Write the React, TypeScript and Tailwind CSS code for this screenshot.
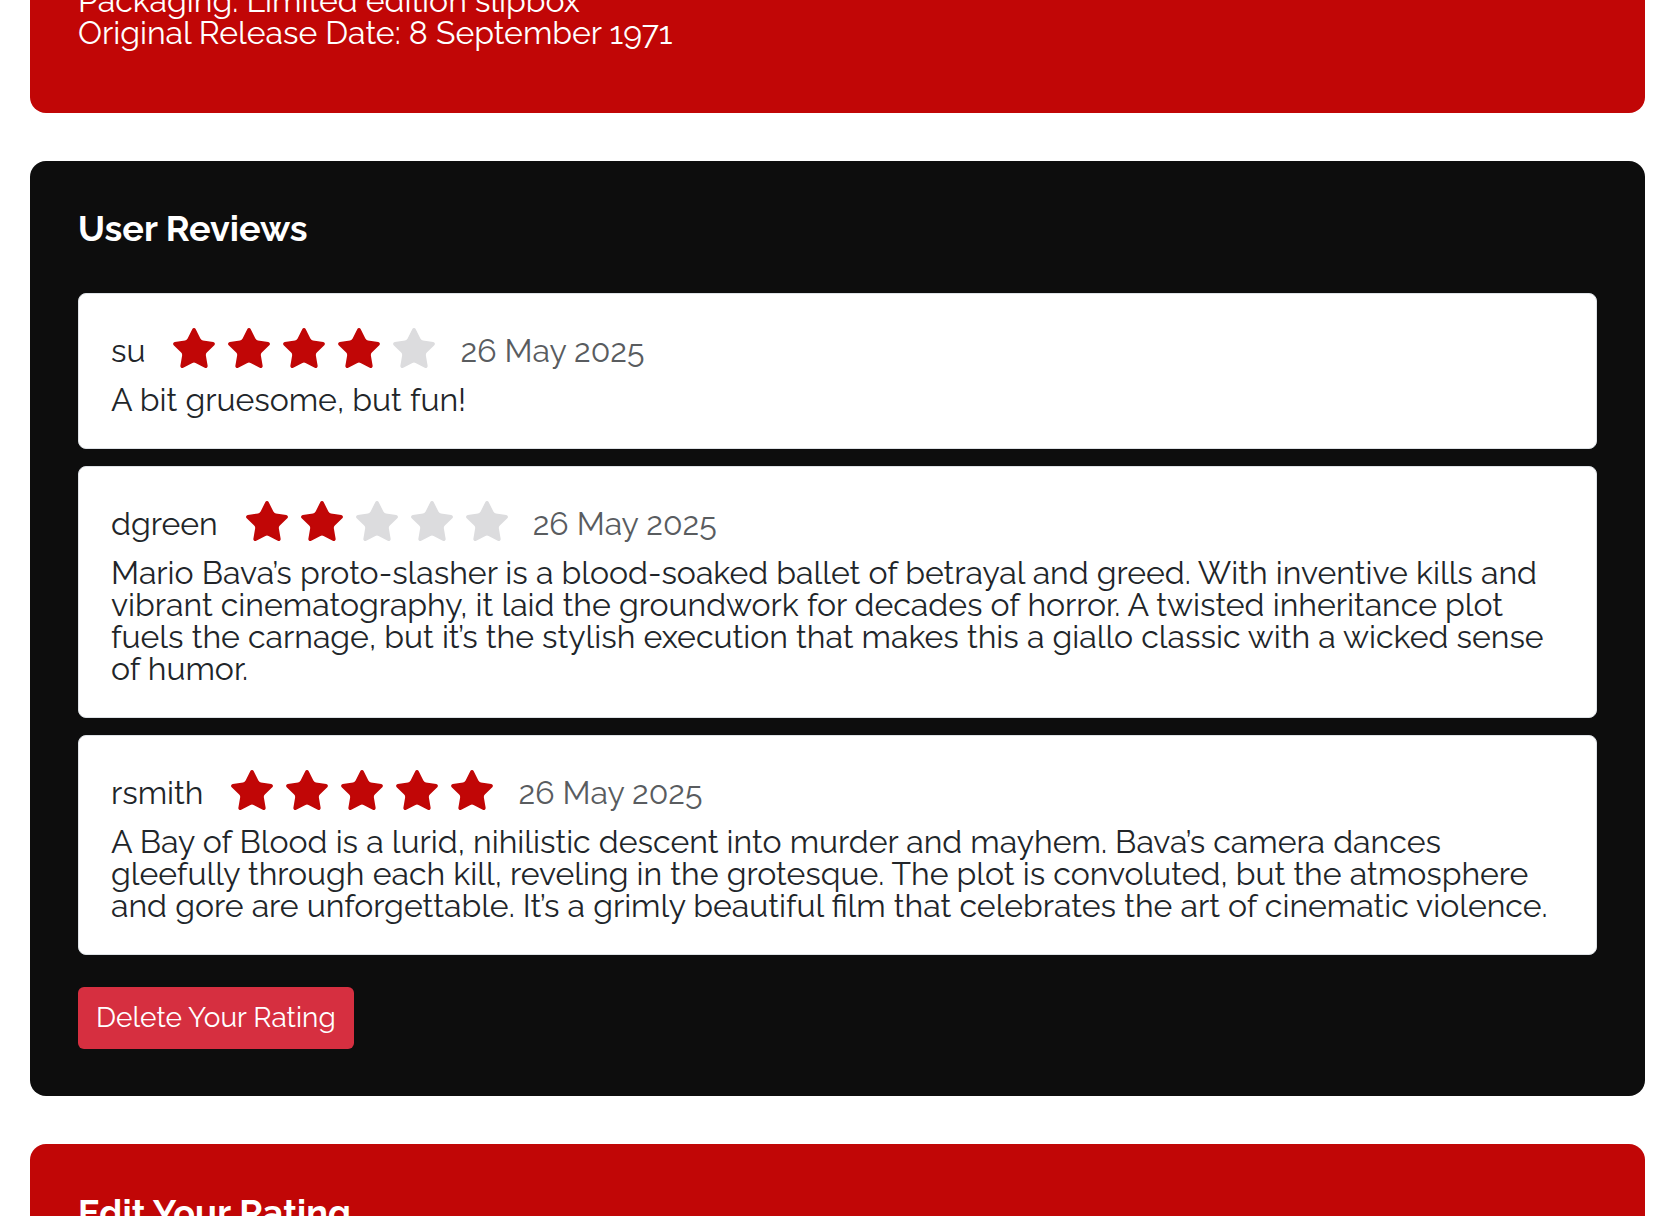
import React from "react";

const RED = "#c10606";

function Star({ filled }: { filled: boolean }) {
  const c = filled ? RED : "#dcdcde";
  return (
    <svg width="48" height="48" viewBox="0 0 24 24" className="shrink-0">
      <path
        d="M11.525 2.295a.53.53 0 0 1 .95 0l2.31 4.679a2.123 2.123 0 0 0 1.595 1.16l5.166.756a.53.53 0 0 1 .294.904l-3.736 3.638a2.123 2.123 0 0 0-.611 1.878l.882 5.14a.53.53 0 0 1-.771.56l-4.618-2.428a2.122 2.122 0 0 0-1.973 0L6.396 21.01a.53.53 0 0 1-.77-.56l.881-5.139a2.122 2.122 0 0 0-.611-1.879L2.16 9.795a.53.53 0 0 1 .294-.906l5.165-.755a2.122 2.122 0 0 0 1.597-1.16z"
        fill={c}
        stroke={c}
        strokeWidth="0.9"
        strokeLinejoin="round"
      />
    </svg>
  );
}

type Review = { user: string; rating: number; date: string; text: string };

const reviews: Review[] = [
  { user: "su", rating: 4, date: "26 May 2025", text: "A bit gruesome, but fun!" },
  {
    user: "dgreen",
    rating: 2,
    date: "26 May 2025",
    text:
      "Mario Bava’s proto-slasher is a blood-soaked ballet of betrayal and greed. With inventive kills and vibrant cinematography, it laid the groundwork for decades of horror. A twisted inheritance plot fuels the carnage, but it’s the stylish execution that makes this a giallo classic with a wicked sense of humor.",
  },
  {
    user: "rsmith",
    rating: 5,
    date: "26 May 2025",
    text:
      "A Bay of Blood is a lurid, nihilistic descent into murder and mayhem. Bava’s camera dances gleefully through each kill, reveling in the grotesque. The plot is convoluted, but the atmosphere and gore are unforgettable. It’s a grimly beautiful film that celebrates the art of cinematic violence.",
  },
];

export default function App() {
  return (
    <div
      className="min-h-screen bg-white pl-[30px] pr-[27px] overflow-hidden"
      style={{ fontFamily: "Raleway, Lato, 'Noto Sans', sans-serif" }}
    >
      <section className="mt-[-63px] rounded-[16px] bg-[#c10606] px-12 pt-12 pb-16 text-white text-[32px] leading-[32px]">
        <div>Packaging: Limited edition slipbox</div>
        <div>Original Release Date: 8 September 1971</div>
      </section>

      <section className="mt-12 rounded-[16px] bg-[#0d0d0d] px-12 pt-[47px] pb-[47px]">
        <h2 className="text-white text-[36px] leading-[40px] font-bold mb-[45px]">User Reviews</h2>
        <div className="flex flex-col gap-[17px]">
          {reviews.map((r) => (
            <div
              key={r.user}
              className="rounded-[8px] border border-[#dee2e6] bg-white px-8 pt-8 pb-8"
            >
              <div className="flex h-[50px] items-center gap-[22px]">
                <span className="text-[32px] leading-[32px] text-[#212529]">{r.user}</span>
                <div className="ml-[3px] -mt-[4px] flex items-center gap-[7px]">
                  {[1, 2, 3, 4, 5].map((i) => (
                    <Star key={i} filled={i <= r.rating} />
                  ))}
                </div>
                <span className="text-[32px] leading-[32px] text-[#595c5f]">{r.date}</span>
              </div>
              <p className="mt-2 text-[32px] leading-[32px] text-[#212529]">{r.text}</p>
            </div>
          ))}
        </div>
        <button className="mt-8 rounded-[6px] bg-[#d62f40] px-[18px] py-[15px] text-[28px] leading-[32px] text-white">
          Delete Your Rating
        </button>
      </section>

      <section className="mt-12 rounded-[16px] bg-[#c10606] px-12 pt-12 pb-12 text-white">
        <h2 className="text-[36px] leading-[40px] font-bold">Edit Your Rating</h2>
        <div className="h-[200px]"></div>
      </section>
    </div>
  );
}
